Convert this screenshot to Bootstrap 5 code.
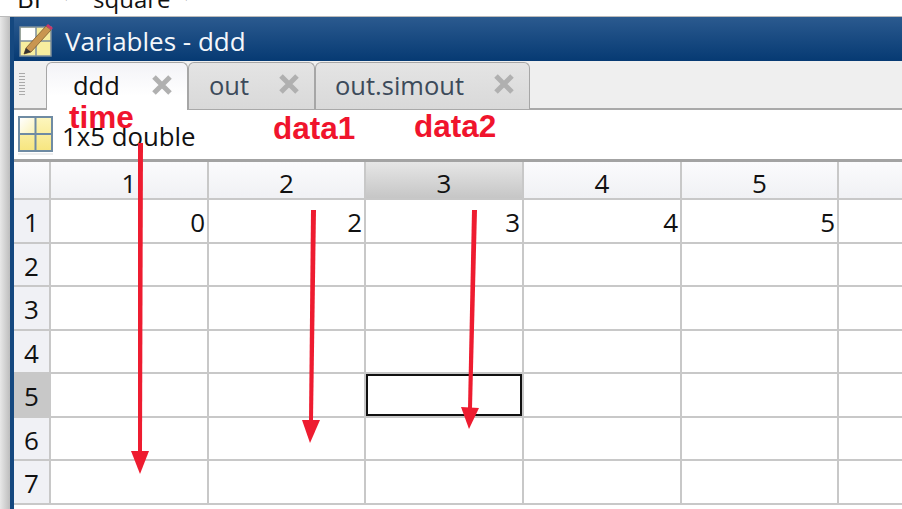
<!DOCTYPE html>
<html lang="en">
<head>
    <meta charset="UTF-8">
    <title>Variables - ddd</title>
    <link href="https://cdn.jsdelivr.net/npm/bootstrap@5.3.3/dist/css/bootstrap.min.css" rel="stylesheet">
    <script src="https://cdn.jsdelivr.net/npm/bootstrap@5.3.3/dist/js/bootstrap.bundle.min.js"></script>
    <style>
        html, body { height: 100%; overflow: hidden; }
        body { font-family: "Open Sans", "Noto Sans", sans-serif; color: #111; background: #fff; }
        .stage { position: relative; width: 902px; height: 509px; overflow: hidden; }
        .top-strip { height: 17px; font-size: 26px; line-height: 1; padding-left: 17px; border-bottom: 1px solid #bbb; overflow: hidden; }
        .top-strip span { margin-top: -15px; white-space: pre; }
        .top-strip .drop-tip { font-size: 13px; margin-top: -10px; color: #333; margin-left: 22px; }
        .top-strip .drop-tip.after-square { margin-left: 12px; }
        .top-strip .field-name { font-size: 24px; margin-left: 23px; margin-top: -13px; }
        .side-gap { width: 10px; background: linear-gradient(90deg, #e8e8e8, #bdbdbd); flex: none; }
        .side-blue { width: 4px; background: #15487f; flex: none; }
        .shell { height: 492px; }
        .title-bar { height: 44px; background: linear-gradient(#2b5a8f, #063a73); color: #f4f7fb; font-size: 26px; gap: 11px; padding-left: 4px; }
        .title-bar span { margin-top: 4px; }
        .tab-strip { height: 49px; background: #efefef; border-bottom: 2px solid #a9a9a9; padding-left: 32px; padding-top: 1px; position: relative; }
        .grip { position: absolute; left: 5px; top: 12px; width: 6px; height: 24px; background: repeating-linear-gradient(#aaa 0 1px, transparent 1px 3px); }
        .var-tab { height: 47px; background: linear-gradient(#e4e4e4, #d9d9d9); border: 1px solid #a6a6a6; border-bottom: 0; border-radius: 6px 6px 0 0; font-size: 25.5px; color: #3c4a5a; padding-bottom: 2px; }
        .var-tab.current { height: 48px; background: linear-gradient(#f3f3f7, #fff 70%); color: #111; position: relative; z-index: 1; }
        .tab-ddd { width: 142px; padding-left: 26px; }
        .tab-out { width: 127px; padding-left: 20px; }
        .tab-simout { width: 215px; padding-left: 19px; }
        .var-tab svg { margin-left: auto; margin-right: 13px; margin-bottom: 2px; }
        .info-bar { height: 52px; background: #fff; border-bottom: 3px solid #a3a3a3; font-size: 25.8px; gap: 8px; padding-left: 3px; }
        .info-bar span { margin-top: 3px; }
        .grid-wrap { flex: 1; overflow: hidden; }
        .sheet { table-layout: fixed; width: 900px; margin: 0; border-collapse: collapse; font-size: 26px; }
        .sheet th, .sheet td { padding: 3px 0 0; border: 0; border-right: 2px solid #c8c8c8; border-bottom: 2px solid #c8c8c8; height: 43.5px; line-height: 1; box-shadow: none; font-weight: 400; color: #111; vertical-align: middle; }
        .sheet thead th { height: 37px; text-align: center; background: linear-gradient(#fbfbfd, #f0f1f4); padding-top: 5px; }
        .sheet thead th.picked { background: linear-gradient(#e6e6e6, #c6c6c6); }
        .sheet tbody th { text-align: center; background: #f0f1f5; }
        .sheet tbody th.picked { background: #c8c8c8; }
        .sheet td { text-align: right; padding-right: 2px; }
        .sheet td.cursor-cell { outline: 2px solid #111; outline-offset: -3px; }
        .notes { position: absolute; left: 0; top: 0; z-index: 2; pointer-events: none; }
        .note-label { position: absolute; z-index: 2; font-family: "Liberation Sans", Arial, sans-serif; font-weight: 700; font-size: 31.5px; line-height: 1; color: #f0142d; }
    </style>
</head>
<body>
<div class="stage">
    <div class="top-strip d-flex">
        <span>BI</span>
        <span class="drop-tip">▾</span>
        <span class="field-name">square</span>
        <span class="drop-tip after-square">▾</span>
    </div>
    <div class="shell d-flex">
        <div class="side-gap"></div>
        <div class="side-blue"></div>
        <div class="flex-grow-1 d-flex flex-column">
            <div class="title-bar d-flex align-items-center">
                <svg width="36" height="38" viewBox="0 0 36 38">
                    <rect x="2" y="7" width="31" height="29" fill="#f7ee9f" stroke="#7d8f9d" stroke-width="1.5"/>
                    <rect x="3" y="8" width="15" height="13" fill="#fff"/>
                    <path d="M18 7V36M2 21H33" stroke="#7d8f9d" stroke-width="1.5"/>
                    <path d="M8 28 28 6l5 4-20 22-7 2z" fill="#c99650" stroke="#7a5a30" stroke-width=".8"/>
                    <path d="M6 34 8 28l5 4z" fill="#333"/>
                    <path d="M28 6l2-2 5 4-2 2z" fill="#c8386a"/>
                </svg>
                <span>Variables - ddd</span>
            </div>
            <div class="tab-strip d-flex">
                <div class="grip"></div>
                <div class="var-tab current tab-ddd d-flex align-items-center">ddd
                    <svg width="24" height="24" viewBox="0 0 24 24"><path d="M4 4 20 20M20 4 4 20" stroke="#b0b0b0" stroke-width="5"/></svg>
                </div>
                <div class="var-tab tab-out d-flex align-items-center">out
                    <svg width="24" height="24" viewBox="0 0 24 24"><path d="M4 4 20 20M20 4 4 20" stroke="#b0b0b0" stroke-width="5"/></svg>
                </div>
                <div class="var-tab tab-simout d-flex align-items-center">out.simout
                    <svg width="24" height="24" viewBox="0 0 24 24"><path d="M4 4 20 20M20 4 4 20" stroke="#b0b0b0" stroke-width="5"/></svg>
                </div>
            </div>
            <div class="info-bar d-flex align-items-center">
                <svg width="37" height="40" viewBox="0 0 37 40">
                    <defs>
                        <linearGradient id="cellwhite" x1="0" y1="0" x2="1" y2="1"><stop offset="0" stop-color="#fff"/><stop offset="1" stop-color="#fbf3b8"/></linearGradient>
                        <linearGradient id="cellyellow" x1="0" y1="0" x2="0" y2="1"><stop offset="0" stop-color="#fdf6bf"/><stop offset="1" stop-color="#f7e57e"/></linearGradient>
                    </defs>
                    <rect x="1" y="38" width="35" height="2" fill="#eee"/>
                    <rect x="2" y="2" width="33" height="34" fill="url(#cellyellow)" stroke="#6f8ba3" stroke-width="2"/>
                    <rect x="3" y="3" width="15" height="15" fill="url(#cellwhite)"/>
                    <path d="M18.500 2V36M2 19H35" stroke="#6f8ba3" stroke-width="2"/>
                </svg>
                <span>1x5 double</span>
            </div>
            <div class="grid-wrap">
                <table class="table sheet">
                    <colgroup>
                        <col style="width:36px"><col style="width:158px"><col style="width:157px"><col style="width:158px"><col style="width:158px"><col style="width:157px"><col>
                    </colgroup>
                    <thead>
                        <tr><th></th><th>1</th><th>2</th><th class="picked">3</th><th>4</th><th>5</th><th></th></tr>
                    </thead>
                    <tbody>
                        <tr><th>1</th><td>0</td><td>2</td><td>3</td><td>4</td><td>5</td><td></td></tr>
                        <tr><th>2</th><td></td><td></td><td></td><td></td><td></td><td></td></tr>
                        <tr><th>3</th><td></td><td></td><td></td><td></td><td></td><td></td></tr>
                        <tr><th>4</th><td></td><td></td><td></td><td></td><td></td><td></td></tr>
                        <tr><th class="picked">5</th><td></td><td></td><td class="cursor-cell"></td><td></td><td></td><td></td></tr>
                        <tr><th>6</th><td></td><td></td><td></td><td></td><td></td><td></td></tr>
                        <tr><th>7</th><td></td><td></td><td></td><td></td><td></td><td></td></tr>
                    </tbody>
                </table>
            </div>
        </div>
    </div>
    <!-- red annotations drawn over the screenshot -->
    <span class="note-label" style="left:69px;top:102px">time</span>
    <span class="note-label" style="left:273px;top:113px">data1</span>
    <span class="note-label" style="left:414px;top:111px">data2</span>
    <svg class="notes" width="902" height="509" viewBox="0 0 902 509">
        <g fill="#ee1c30" stroke="none">
            <path d="M138 143h5l-1 308h-4z"/><path d="M131 451 149 451 140 474z"/>
            <path d="M311 210h5l-3 210h-4z"/><path d="M302 420 320 420 310 443z"/>
            <path d="M472 210h5l-5 198h-4z"/><path d="M461 407 479 408 469 429z"/>
        </g>
    </svg>
</div>
</body>
</html>
